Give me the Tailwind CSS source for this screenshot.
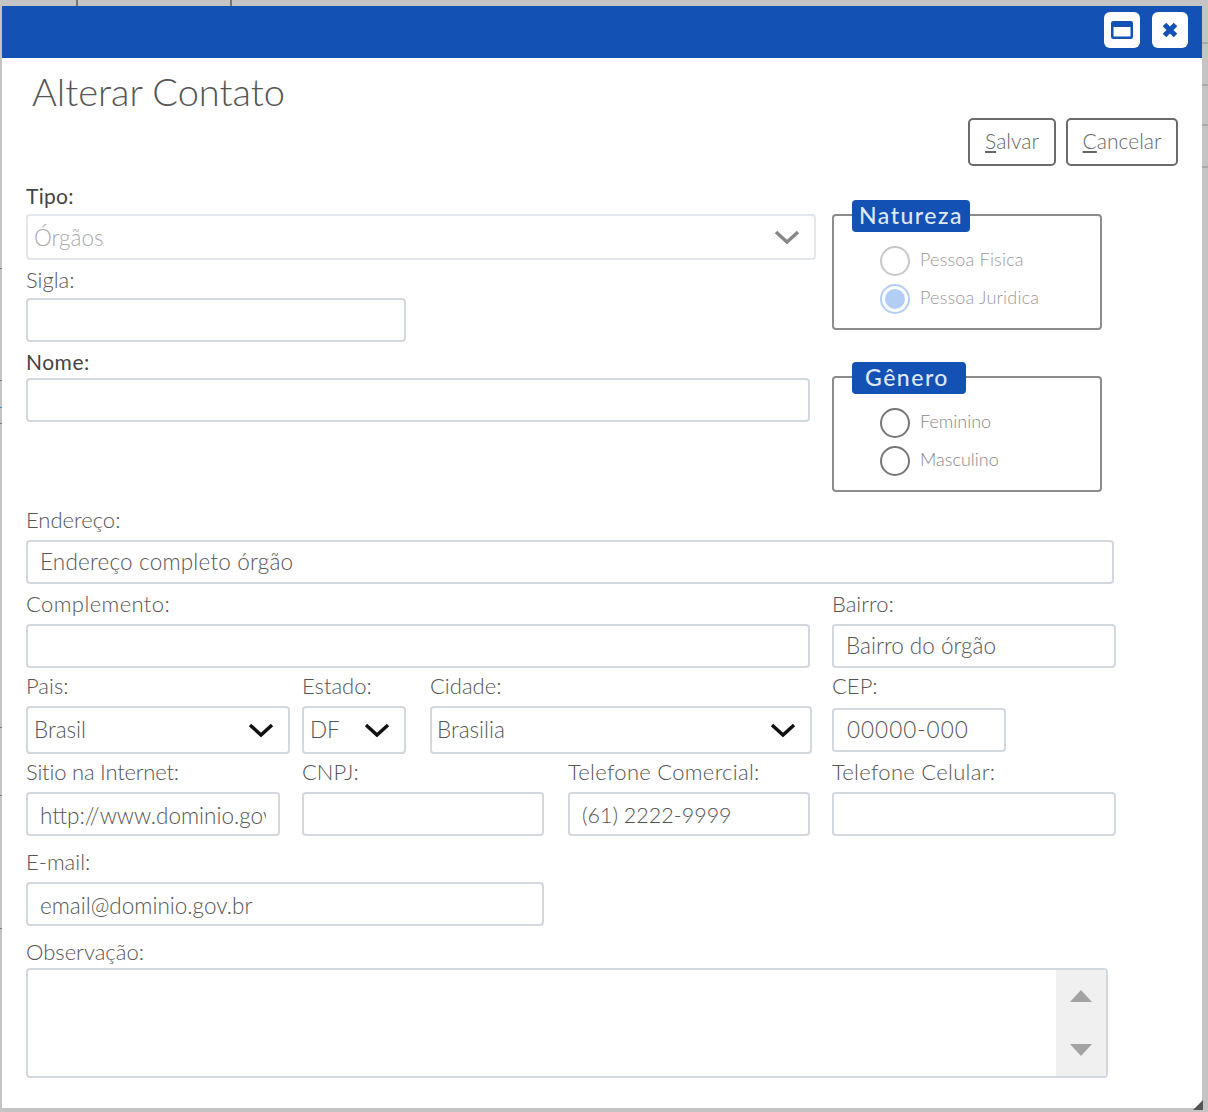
<!DOCTYPE html>
<html lang="pt-BR">
<head>
  <meta charset="UTF-8">
  <meta name="viewport" content="width=device-width, initial-scale=1.0">
  <title>Alterar Contato</title>
  <script src="https://cdn.jsdelivr.net/npm/@tailwindcss/browser@4"></script>
</head>
<body class="relative h-[1112px] w-[1208px] overflow-hidden bg-[#c4c4c4] font-['Lato',sans-serif] font-light text-[#555]">
  <!-- table lines behind the dialog -->
  <span class="absolute left-[76px] top-0 h-[6px] w-[2px] bg-[#777]"></span>
  <span class="absolute left-[230px] top-0 h-[6px] w-[2px] bg-[#777]"></span>
  <span class="absolute left-[1202px] top-[42px] h-[2px] w-[6px] bg-[#aaa]"></span>
  <span class="absolute left-[1202px] top-[84px] h-[2px] w-[6px] bg-[#aaa]"></span>
  <span class="absolute left-[1202px] top-[124px] h-[2px] w-[6px] bg-[#aaa]"></span>
  <span class="absolute left-[1202px] top-[166px] h-[2px] w-[6px] bg-[#aaa]"></span>
  <span class="absolute left-0 top-[268px] h-[1px] w-[2px] bg-[#777]"></span>
  <span class="absolute left-0 top-[380px] h-[1px] w-[2px] bg-[#777]"></span>
  <span class="absolute left-0 top-[407px] h-[1px] w-[2px] bg-[#4a90d9]"></span>
  <span class="absolute left-0 top-[423px] h-[1px] w-[2px] bg-[#777]"></span>
  <span class="absolute left-0 top-[727px] h-[1px] w-[2px] bg-[#777]"></span>
  <span class="absolute left-0 top-[795px] h-[1px] w-[2px] bg-[#777]"></span>
  <span class="absolute left-0 top-[928px] h-[1px] w-[2px] bg-[#777]"></span>

  <div class="absolute left-[2px] top-[6px] h-[1102px] w-[1200px] bg-white">
    <!-- Header -->
    <div class="flex h-[52px] items-center justify-end gap-[12px] bg-[#1351b4] pb-[4px] pr-[14px]">
      <button class="flex h-[36px] w-[36px] items-center justify-center rounded-[6px] bg-white">
        <svg width="22" height="18" viewBox="0 0 22 18"><rect x="1.25" y="1.25" width="19.5" height="15.5" rx="1" fill="none" stroke="#1351b4" stroke-width="2.5"/><rect x="1" y="1" width="20" height="5" fill="#1351b4"/></svg>
      </button>
      <button class="flex h-[36px] w-[36px] items-center justify-center rounded-[6px] bg-white">
        <svg width="16" height="16" viewBox="0 0 16 16"><path d="M2.5 2.5l11 11M13.5 2.5l-11 11" stroke="#1351b4" stroke-width="5"/></svg>
      </button>
    </div>

    <div class="pl-[24px]">
      <h1 class="ml-[6px] h-[60px] pt-[8px] text-[38px] leading-[50px] font-light text-[#555]">Alterar Contato</h1>

      <div class="flex justify-end gap-[10px] pr-[24px]">
        <button class="h-[48px] w-[88px] rounded-[5px] border-2 border-[#6b6b6b] pb-[2px] text-[21px] text-[#666]"><u>S</u>alvar</button>
        <button class="h-[48px] w-[112px] rounded-[5px] border-2 border-[#6b6b6b] pb-[2px] text-[21px] text-[#666]"><u>C</u>ancelar</button>
      </div>

      <!-- Tipo / Sigla / Nome + Natureza / Genero -->
      <div class="mt-[20px] flex h-[306px]">
        <div class="w-[790px]">
          <label class="block h-[20px] text-[21px] leading-[19px] tracking-[0.3px] font-normal text-[#444]">Tipo:</label>
          <div class="mt-[8px] flex h-[46px] w-[790px] items-center justify-between rounded-[4px] border-2 border-[#e3e7ec] pl-[6px] pr-[14px] text-[22.5px] text-[#aaa]">
            <span class="pt-[2px]">Órgãos</span>
            <svg width="26" height="14" viewBox="0 0 26 14"><path d="M2 2l11 10L24 2" fill="none" stroke="#888" stroke-width="3.5"/></svg>
          </div>
          <label class="mt-[10px] block h-[20px] text-[22px] leading-[19px] text-[#555]">Sigla:</label>
          <input class="mt-[8px] block h-[44px] w-[380px] rounded-[4px] border-2 border-[#d3d8de]">
          <label class="mt-[10px] block h-[20px] text-[21px] leading-[19px] tracking-[0.5px] font-normal text-[#444]">Nome:</label>
          <input class="mt-[6px] block h-[44px] w-[784px] rounded-[4px] border-2 border-[#d3d8de]">
        </div>

        <div class="ml-[16px] w-[270px] pt-[28px]">
          <div class="relative h-[116px] rounded-[4px] border-2 border-[#8c8c8c] pl-[46px] pt-[26px]">
            <span class="absolute left-[18px] top-[-16px] flex h-[32px] w-[118px] items-center justify-center rounded-[4px] bg-[#1351b4] pb-[2px] text-[23px] font-medium tracking-[1.5px] text-[#dfe8f7]">Natureza</span>
            <div class="flex h-[38px] items-center gap-[10px] text-[18px] tracking-[0.2px] text-[#999]">
              <span class="h-[30px] w-[30px] rounded-full border-2 border-[#c8c8c8]"></span><span class="pb-[3px]">Pessoa Fisica</span>
            </div>
            <div class="flex h-[38px] items-center gap-[10px] text-[18px] tracking-[0.2px] text-[#999]">
              <span class="flex h-[30px] w-[30px] items-center justify-center rounded-full border-2 border-[#b3cef5]"><span class="h-[20px] w-[20px] rounded-full bg-[#b3cef5]"></span></span><span class="pb-[3px]">Pessoa Juridica</span>
            </div>
          </div>
          <div class="relative mt-[46px] h-[116px] rounded-[4px] border-2 border-[#8c8c8c] pl-[46px] pt-[26px]">
            <span class="absolute left-[18px] top-[-16px] flex h-[32px] w-[114px] items-center justify-center rounded-[4px] bg-[#1351b4] pb-[2px] pr-[4px] text-[23px] font-medium tracking-[1.5px] text-[#dfe8f7]">Gênero</span>
            <div class="flex h-[38px] items-center gap-[10px] text-[18px] text-[#888]">
              <span class="h-[30px] w-[30px] rounded-full border-2 border-[#777]"></span><span class="pb-[3px]">Feminino</span>
            </div>
            <div class="flex h-[38px] items-center gap-[10px] text-[18px] text-[#888]">
              <span class="h-[30px] w-[30px] rounded-full border-2 border-[#777]"></span><span class="pb-[3px]">Masculino</span>
            </div>
          </div>
        </div>
      </div>

      <!-- Endereco -->
      <label class="mt-[18px] block h-[20px] text-[22px] leading-[19px]">Endereço:</label>
      <input value="Endereço completo órgão" class="mt-[10px] block h-[44px] w-[1088px] rounded-[4px] border-2 border-[#d3d8de] px-[12px] pb-[2px] text-[22.5px] tracking-[0.2px]">

      <!-- Complemento / Bairro -->
      <div class="mt-[10px] flex">
        <div class="w-[806px]">
          <label class="block h-[20px] text-[22px] leading-[19px] tracking-[0.4px]">Complemento:</label>
          <input class="mt-[10px] block h-[44px] w-[784px] rounded-[4px] border-2 border-[#d3d8de]">
        </div>
        <div class="w-[284px]">
          <label class="block h-[20px] text-[22px] leading-[19px]">Bairro:</label>
          <input value="Bairro do órgão" class="mt-[10px] block h-[44px] w-full rounded-[4px] border-2 border-[#d3d8de] px-[12px] pb-[2px] text-[22.5px]">
        </div>
      </div>

      <!-- Pais / Estado / Cidade / CEP -->
      <div class="mt-[8px] flex">
        <div class="mr-[12px] w-[264px]">
          <label class="block h-[20px] text-[22px] leading-[19px]">Pais:</label>
          <div class="mt-[10px] flex h-[48px] items-center justify-between rounded-[4px] border-2 border-[#d3d8de] pl-[6px] pr-[14px] text-[22.5px]">
            <span>Brasil</span>
            <svg width="26" height="14" viewBox="0 0 26 14"><path d="M2 2l11 10L24 2" fill="none" stroke="#111" stroke-width="3.5"/></svg>
          </div>
        </div>
        <div class="mr-[24px] w-[104px]">
          <label class="block h-[20px] text-[22px] leading-[19px]">Estado:</label>
          <div class="mt-[10px] flex h-[48px] items-center justify-between rounded-[4px] border-2 border-[#d3d8de] pl-[6px] pr-[14px] text-[22.5px]">
            <span>DF</span>
            <svg width="26" height="14" viewBox="0 0 26 14"><path d="M2 2l11 10L24 2" fill="none" stroke="#111" stroke-width="3.5"/></svg>
          </div>
        </div>
        <div class="mr-[20px] w-[382px]">
          <label class="block h-[20px] text-[22px] leading-[19px]">Cidade:</label>
          <div class="mt-[10px] flex h-[48px] items-center justify-between rounded-[4px] border-2 border-[#d3d8de] pl-[5px] pr-[14px] text-[22.5px]">
            <span>Brasilia</span>
            <svg width="26" height="14" viewBox="0 0 26 14"><path d="M2 2l11 10L24 2" fill="none" stroke="#111" stroke-width="3.5"/></svg>
          </div>
        </div>
        <div class="w-[174px]">
          <label class="block h-[20px] text-[22px] leading-[19px]">CEP:</label>
          <input value="00000-000" class="mt-[12px] block h-[44px] w-full rounded-[4px] border-2 border-[#d3d8de] px-[13px] pb-[2px] text-[22.5px] tracking-[1px]">
        </div>
      </div>

      <!-- Sitio / CNPJ / Telefones -->
      <div class="mt-[8px] flex">
        <div class="mr-[22px] w-[254px]">
          <label class="block h-[20px] text-[22px] leading-[19px] tracking-[-0.2px]">Sitio na Internet:</label>
          <input value="http://www.dominio.gov.br" class="mt-[10px] block h-[44px] w-full rounded-[4px] border-2 border-[#d3d8de] px-[12px] pt-[2px] text-[22.5px]">
        </div>
        <div class="mr-[24px] w-[242px]">
          <label class="block h-[20px] text-[22px] leading-[19px]">CNPJ:</label>
          <input class="mt-[10px] block h-[44px] w-full rounded-[4px] border-2 border-[#d3d8de]">
        </div>
        <div class="mr-[22px] w-[242px]">
          <label class="block h-[20px] text-[22px] leading-[19px] tracking-[0.3px]">Telefone Comercial:</label>
          <input value="(61) 2222-9999" class="mt-[10px] block h-[44px] w-full rounded-[4px] border-2 border-[#d3d8de] px-[12px] pt-[2px] text-[21.5px]">
        </div>
        <div class="w-[284px]">
          <label class="block h-[20px] text-[22px] leading-[19px] tracking-[0.3px]">Telefone Celular:</label>
          <input class="mt-[10px] block h-[44px] w-full rounded-[4px] border-2 border-[#d3d8de]">
        </div>
      </div>

      <!-- E-mail -->
      <label class="mt-[16px] block h-[20px] text-[22px] leading-[19px]">E-mail:</label>
      <input value="email@dominio.gov.br" class="mt-[10px] block h-[44px] w-[518px] rounded-[4px] border-2 border-[#d3d8de] px-[12px] pt-[2px] text-[22.5px]">

      <!-- Observacao -->
      <label class="mt-[16px] block h-[20px] text-[22px] leading-[19px]">Observação:</label>
      <div class="mt-[6px] flex h-[110px] w-[1082px] justify-end rounded-[4px] border-2 border-[#d3d8de]">
        <div class="flex w-[50px] flex-col items-center justify-between bg-[#f0f0f0] py-[20px]">
          <span class="h-0 w-0 border-x-[11px] border-b-[12px] border-x-transparent border-b-[#a3a3a3]"></span>
          <span class="h-0 w-0 border-x-[11px] border-t-[12px] border-x-transparent border-t-[#a3a3a3]"></span>
        </div>
      </div>
    </div>

    <!-- resize grip -->
    <svg class="absolute bottom-[-2px] right-[-1px]" width="10" height="10" viewBox="0 0 10 10"><path d="M10 0v10H0z" fill="#555"/></svg>
  </div>
</body>
</html>
